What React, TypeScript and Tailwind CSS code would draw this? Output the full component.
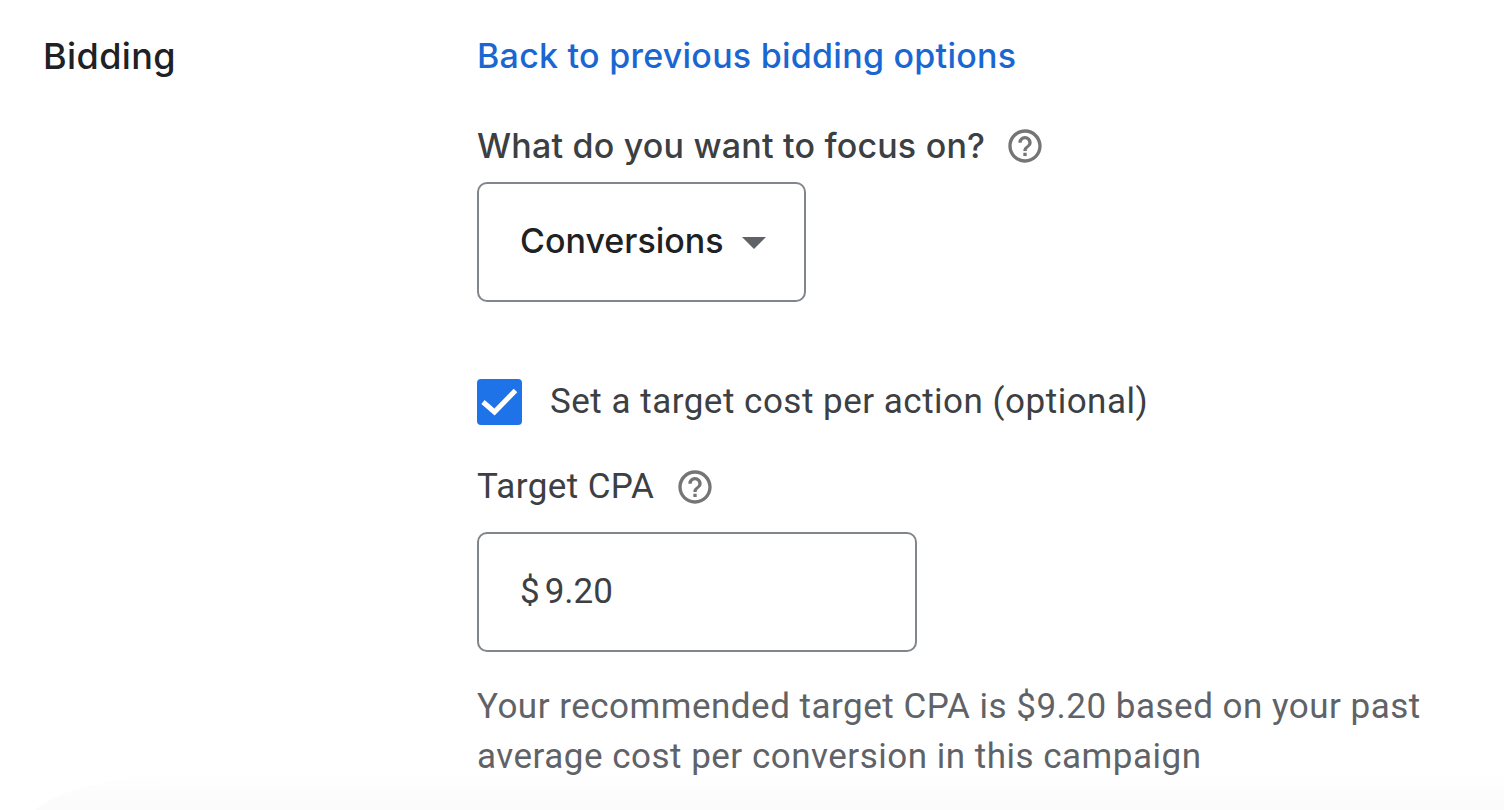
const helpPath =
  "M11 18h2v-2h-2v2zm1-16C6.48 2 2 6.48 2 12s4.48 10 10 10 10-4.48 10-10S17.52 2 12 2zm0 18c-4.41 0-8-3.59-8-8s3.59-8 8-8 8 3.59 8 8-3.59 8-8 8zm0-14c-2.21 0-4 1.79-4 4h2c0-1.1.9-2 2-2s2 .9 2 2c0 2-3 1.75-3 5h2c0-2.25 3-2.5 3-5 0-2.21-1.79-4-4-4z";

function HelpIcon() {
  return (
    <svg viewBox="0 0 24 24" className="h-10 w-10 fill-[#757575]">
      <path d={helpPath} />
    </svg>
  );
}

export default function App() {
  return (
    <main className="relative flex h-[810px] overflow-hidden bg-white font-['Roboto',sans-serif]">
      {/* Section label */}
      <h2 className="w-[477px] shrink-0 pl-[43px] pt-[33px] font-['Inter',sans-serif] text-[36px] font-medium leading-[46px] tracking-[0.4px] text-[#202124]">
        Bidding
      </h2>

      <div className="flex flex-col pt-[33px]">
        <a className="font-['Inter',sans-serif] text-[34px] font-medium leading-[46px] tracking-[0.25px] text-[#1a67d2]">
          Back to previous bidding options
        </a>

        <div className="mt-[44px] flex h-[46px] items-center gap-[20px]">
          <span className="font-['Inter',sans-serif] text-[34px] font-medium leading-[46px] tracking-[0.2px] text-[#3c4043]">
            What do you want to focus on?
          </span>
          <HelpIcon />
        </div>

        {/* Focus dropdown */}
        <div className="mt-[13px] flex h-[120px] w-[329px] items-center rounded-[10px] border-2 border-[#80868b] pl-[41px]">
          <span className="-mt-[4px] font-['Inter',sans-serif] text-[34px] font-medium text-[#202124]">Conversions</span>
          <span className="ml-[18px] mt-[2px] h-0 w-0 border-x-[12px] border-t-[12px] border-x-transparent border-t-[#5f6368]" />
        </div>

        <label className="mt-[77px] flex h-[46px] items-center">
          <span className="flex h-[46px] w-[45px] items-center justify-center rounded-[4px] bg-[#1f73e8]">
            <svg viewBox="0 0 45 46" className="h-[46px] w-[45px]">
              <path d="M6 23 L17.5 33 L38.5 11.5" fill="none" stroke="white" strokeWidth="5" />
            </svg>
          </span>
          <span className="ml-[28px] text-[35px] leading-[46px] tracking-[0.5px] text-[#3c4043]">
            Set a target cost per action (optional)
          </span>
        </label>

        <div className="mt-[39px] flex h-[46px] items-center gap-[21px]">
          <span className="text-[35px] leading-[46px] tracking-[0.4px] text-[#3c4043]">Target CPA</span>
          <HelpIcon />
        </div>

        {/* CPA input */}
        <div className="mt-[22px] flex h-[120px] w-[440px] items-center rounded-[10px] border-2 border-[#80868b] pl-[41px] text-[35px] text-[#3c4043]">
          <span>$</span>
          <span className="ml-[5px]">9.20</span>
        </div>

        <p className="mt-[30px] w-[1000px] text-[35px] leading-[50px] tracking-[0.5px] text-[#5f6368]">
          Your recommended target CPA is $9.20 based on your past
          <br />
          average cost per conversion in this campaign
        </p>
      </div>

      {/* Shadow of the panel below */}
      <div className="absolute bottom-[-40px] left-[28px] right-[-60px] h-[75px] rounded-tl-[160px_50px] bg-gradient-to-b from-[#fefefe] to-[#f7f7f7]" />
    </main>
  );
}
